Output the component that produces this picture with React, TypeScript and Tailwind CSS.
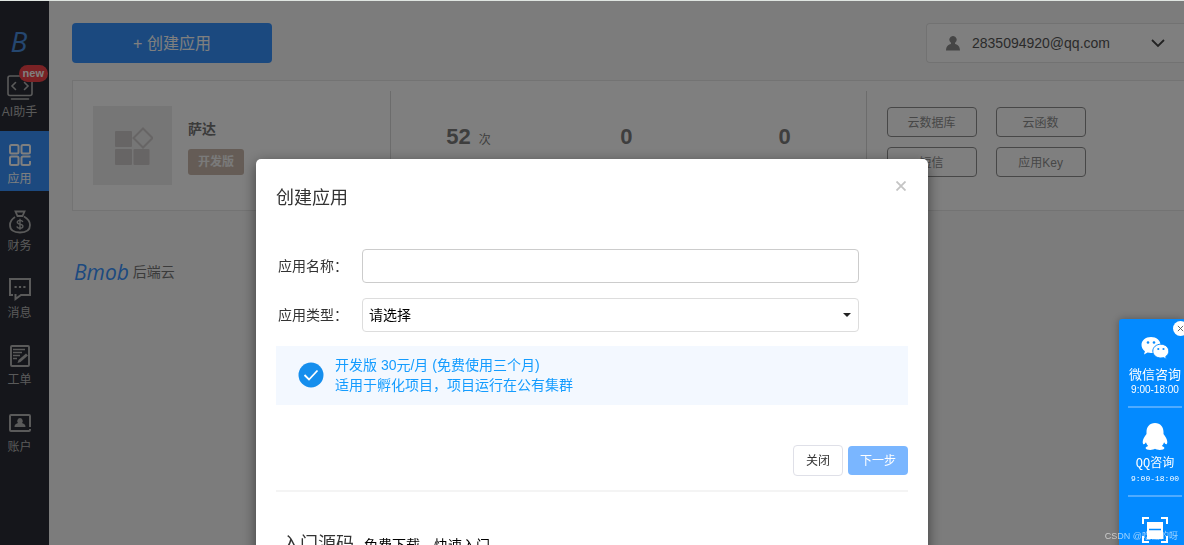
import type { ReactNode } from "react";

const FONT = "font-['Liberation_Sans','Noto_Sans_CJK_SC',sans-serif]";

function AiIcon() {
  return (
    <svg viewBox="0 0 26 26" className="h-[26px] w-[26px]" fill="none" stroke="currentColor" strokeWidth="1.6" strokeLinecap="round">
      <rect x="1" y="1" width="24" height="19.5" rx="2" />
      <path d="M8.5 7.5 5 11l3.500 3.500M17.500 7.500 21 11l-3.500 3.500M4.500 24h17" />
    </svg>
  );
}

function AppsIcon() {
  return (
    <svg viewBox="0 0 22 22" className="h-[22px] w-[22px]" fill="none" stroke="currentColor" strokeWidth="2">
      <rect x="1" y="1" width="8.500" height="8.500" rx="1.500" />
      <rect x="12.500" y="1" width="8.500" height="8.500" rx="1.500" />
      <rect x="1" y="12.500" width="8.500" height="8.500" rx="1.500" />
      <path d="M21.500 12.500H14a1.500 1.500 0 0 0-1.500 1.500v5.500A1.500 1.500 0 0 0 14 21h5.500a1.500 1.500 0 0 0 1.500-1.500V17" />
    </svg>
  );
}

function MoneyIcon() {
  return (
    <svg viewBox="0 0 24 24" className="h-6 w-6" fill="none" stroke="currentColor" strokeWidth="1.800">
      <path d="M7.500 1.500h9l-2 4.500h-5zM16 6.500c3.500 2 6 4.800 6 8.500 0 5-3.500 7.500-10 7.500S2 20 2 15c0-3.500 2-6 5-8" />
      <path d="M14.800 12c-.3-1-1.300-1.600-2.800-1.600s-2.700.7-2.700 1.900c0 2.700 5.600 1.300 5.600 4 0 1.200-1.200 1.900-2.900 1.900s-2.900-.7-3.100-1.900M12 8.800v11" strokeWidth="1.400" />
    </svg>
  );
}

function MessageIcon() {
  return (
    <svg viewBox="0 0 24 24" className="h-6 w-6" fill="none" stroke="currentColor" strokeWidth="2">
      <path d="M5 18H2V2h20v16H13l-5.500 4V17" />
      <path d="M6.500 10h2.200M10.900 10h2.200M15.300 10h2.200" />
    </svg>
  );
}

function OrderIcon() {
  return (
    <svg viewBox="0 0 24 24" className="h-6 w-6" fill="none" stroke="currentColor" strokeWidth="1.900">
      <rect x="3" y="2" width="18" height="20" rx="1" />
      <path d="M5 5.500h12M5 8.500h9M5 11.500h7M5 14.500h4" strokeWidth="1.600" />
      <path d="m9.500 19 1-3L18 9.500l2 2L12.500 18z" fill="currentColor" stroke="none" />
    </svg>
  );
}

function AccountIcon() {
  return (
    <svg viewBox="0 0 24 24" className="h-6 w-6" fill="none" stroke="currentColor" strokeWidth="2">
      <path d="M22 16V5a1 1 0 0 0-1-1H3a1 1 0 0 0-1 1v14a1 1 0 0 0 1 1h18a1 1 0 0 0 1-1v-1" />
      <path d="M12 7a3 3 0 0 1 2 5c2.500.8 3.500 1.800 3.500 4h-11c0-2.200 1-3.200 3.500-4a3 3 0 0 1 2-5z" fill="currentColor" stroke="none" />
    </svg>
  );
}

function PersonIcon() {
  return (
    <svg viewBox="0 0 14 15" className="h-[15px] w-[14px] text-[#8a8a8a]" fill="currentColor">
      <path d="M7 0a3.600 3.600 0 0 1 2.200 6.500L9 8c3 .7 4.800 2.200 5 6.500H0C.2 10.200 2 8.700 5 8l-.2-1.500A3.600 3.600 0 0 1 7 0z" />
    </svg>
  );
}

function WechatIcon() {
  return (
    <svg viewBox="0 0 28 24" className="h-6 w-7">
      <path d="M10 1C4.500 1 .5 4.500.5 9c0 2.500 1.300 4.700 3.400 6.200L3 18.500l3.600-1.900c1.100.3 2.200.5 3.400.5C15.500 17 19.500 13.500 19.500 9S15.500 1 10 1z" fill="#fff" />
      <circle cx="7" cy="6.500" r="1.300" fill="#0a8cff" />
      <circle cx="13" cy="6.500" r="1.300" fill="#0a8cff" />
      <path d="M19.800 8.200c-4.400 0-8 3-8 6.900s3.600 6.900 8 6.900c1 0 1.900-.1 2.700-.4l3 1.700-.8-2.700c1.900-1.300 3.100-3.200 3.100-5.500 0-3.900-3.600-6.900-8-6.900z" fill="#fff" stroke="#0a8cff" />
      <circle cx="17.300" cy="13" r="1.100" fill="#0a8cff" />
      <circle cx="22.500" cy="13" r="1.100" fill="#0a8cff" />
    </svg>
  );
}

function QqIcon() {
  return (
    <svg viewBox="0 0 26 27" className="h-[27px] w-[26px]" fill="#fff">
      <path d="M13 0c5.500 0 8.500 4 8.500 9v2c2 2.500 3.800 5.500 3.800 8 0 1.500-.5 2.300-1.100 2.300-.7 0-1.500-1-2.100-2-.4 1.500-1.200 2.800-2.200 3.800 1.500.5 2.500 1.200 2.500 2 0 1.200-2 1.900-4.700 1.900-2 0-3.700-.5-4.700-1.200C12 26.500 10.300 27 8.300 27c-2.700 0-4.700-.7-4.700-1.900 0-.8 1-1.500 2.500-2-1-1-1.800-2.300-2.200-3.800-.6 1-1.400 2-2.100 2C1.200 21.300.7 20.500.7 19c0-2.500 1.800-5.500 3.800-8V9C4.500 4 7.500 0 13 0z" />
    </svg>
  );
}

function ScanIcon() {
  return (
    <svg viewBox="0 0 26 26" className="h-[26px] w-[26px]" fill="none" stroke="#fff" strokeWidth="2">
      <path d="M1 7V1h6M19 1h6v6M1 19v6h6M19 25h6v-6" />
      <path d="M5 5h16v17H5z" fill="#fff" stroke="none" />
      <path d="M7 12.500h12" stroke="#038aff" strokeWidth="1.500" />
    </svg>
  );
}

function NavItem({ icon, label, active, badge }: { icon: ReactNode; label: string; active?: boolean; badge?: string }) {
  return (
    <a
      href="#"
      className={
        active
          ? "relative flex h-[60px] w-full flex-col items-center justify-end bg-[#3893ff] pr-[10px] text-white"
          : "relative flex h-[60px] w-full flex-col items-center justify-end pr-[10px] text-[#b4b4b4]"
      }
    >
      <span className="flex h-[26px] items-center">{icon}</span>
      <span className="mt-[2px] mb-[3px] text-xs leading-[18px] whitespace-nowrap">{label}</span>
      {badge && (
        <span className="absolute top-[1px] right-[1px] rounded-full bg-[#f5454a] px-1 text-[11px] leading-[17px] font-bold text-white">{badge}</span>
      )}
    </a>
  );
}

function Sidebar() {
  return (
    <nav className="flex w-[49px] shrink-0 flex-col bg-[#2a2d36]">
      <a href="#" className="flex h-16 items-end justify-center pr-[11px] pb-[7px] font-['Open_Sans'] text-[28px] leading-[32px] text-[#4b8fe0] italic">
        B
      </a>
      <div className="flex flex-col gap-[7px]">
        <NavItem icon={<AiIcon />} label="AI助手" badge="new" />
        <NavItem icon={<AppsIcon />} label="应用" active />
        <NavItem icon={<MoneyIcon />} label="财务" />
        <NavItem icon={<MessageIcon />} label="消息" />
        <NavItem icon={<OrderIcon />} label="工单" />
        <NavItem icon={<AccountIcon />} label="账户" />
      </div>
    </nav>
  );
}

function Stat({ value, unit }: { value: string; unit?: string }) {
  return (
    <div className="flex flex-1 items-baseline justify-center gap-2 pt-8 pr-1">
      <span className="text-[22px] leading-7 font-bold text-[#7d7d7d]">{value}</span>
      {unit && <span className="text-xs text-[#7d7d7d]">{unit}</span>}
    </div>
  );
}

function AppCard() {
  const actions = ["云数据库", "云函数", "短信", "应用Key"];
  return (
    <section className="grid grid-cols-[2fr_3fr_2fr] border-y border-l border-[#e6e6e6] bg-white py-[10px]">
      <div className="flex gap-4 px-5 py-[15px]">
        <div className="flex size-[79px] items-center justify-center bg-[#ededed]">
          <svg viewBox="0 0 40 40" className="size-10" fill="#cfcaca">
            <rect x="2" y="5" width="17" height="16" rx="1" />
            <rect x="2" y="23" width="17" height="16" rx="1" />
            <rect x="20.500" y="23" width="16" height="16" rx="1" />
            <path d="m30 2.500 9.500 9.500-9.500 9.500-9.500-9.500z" fill="none" stroke="#cfcaca" strokeWidth="2" />
          </svg>
        </div>
        <div className="flex flex-col items-start gap-[10px] pt-[13px]">
          <h2 className="text-sm leading-5 font-bold text-[#777]">萨达</h2>
          <span className="rounded-[3px] bg-[#cbb9ac] px-[10px] pt-px text-xs leading-[25px] font-bold text-[#f4f4f4]">开发版</span>
        </div>
      </div>
      <div className="flex border-x border-[#d8d8d8]">
        <Stat value="52" unit="次" />
        <Stat value="0" />
        <Stat value="0" />
      </div>
      <div className="px-5 py-4">
        <div className="grid w-max grid-cols-2 gap-x-[19px] gap-y-[10px]">
          {actions.map((label) => (
            <button key={label} type="button" className="h-[30px] w-[90px] rounded-[4px] border border-[#8f8f8f] pt-[2px] text-xs text-[#8f8f8f]">
              {label}
            </button>
          ))}
        </div>
      </div>
    </section>
  );
}

function CreateDialog() {
  return (
    <div className="fixed inset-0 overflow-hidden bg-black/50 px-4 pt-[159px]">
      <div
        role="dialog"
        aria-labelledby="create-title"
        className="mx-auto max-w-[672px] rounded-[5px] bg-white px-5 pb-10 text-[#333] shadow-[0_4px_14px_rgba(0,0,0,0.5)]"
      >
        <header className="flex items-start justify-between pt-[15px]">
          <h1 id="create-title" className="pt-[11px] text-lg leading-[26px] text-[#333]">
            创建应用
          </h1>
          <button type="button" aria-label="关闭窗口" className="flex h-6 w-[15px] items-center justify-center text-[#c4c4c4]">
            <svg viewBox="0 0 10 10" className="size-[10px]" stroke="currentColor" strokeWidth="1.800">
              <path d="m.5.5 9 9M9.500.5l-9 9" />
            </svg>
          </button>
        </header>
        <form className="pt-[38px] text-sm">
          <div className="grid grid-cols-[86px_1fr] gap-y-[14px] pr-[49px]">
            <label htmlFor="app-name" className="pl-[2px] leading-[35px]">
              应用名称：
            </label>
            <input id="app-name" type="text" className="h-[34px] w-full rounded-[4px] border border-[#ccc] px-2 outline-none" />
            <label htmlFor="app-type" className="pl-[2px] leading-[35px]">
              应用类型：
            </label>
            <div className="relative">
              <select id="app-type" className="h-[34px] w-full appearance-none rounded-[4px] border border-[#ddd] bg-white px-[6px] text-black outline-none">
                <option>请选择</option>
              </select>
              <svg viewBox="0 0 8 4" className="pointer-events-none absolute top-[15px] right-2 h-1 w-2" fill="#222">
                <path d="M0 0h8L4 4z" />
              </svg>
            </div>
          </div>
          <div className="mt-[13px] flex items-center gap-[11px] bg-[#f3f8ff] pt-[9px] pb-[10px] pl-[22px]">
            <svg viewBox="0 0 26 26" className="size-[26px]">
              <circle cx="13" cy="13" r="12.500" fill="#158eed" />
              <path d="m6.500 13 4.500 4.500 8.500-9" fill="none" stroke="#fff" strokeWidth="1.800" />
            </svg>
            <p className="leading-5 text-[#149cff]">
              开发版 30元/月 (免费使用三个月)
              <br />
              适用于孵化项目，项目运行在公有集群
            </p>
          </div>
          <div className="mt-10 flex items-center justify-end gap-[5px] border-b-2 border-[#f4f4f4] pb-[14px] text-xs">
            <button type="button" className="h-[31px] rounded-[4px] border border-[#dfe0e8] px-3 text-[#333]">
              关闭
            </button>
            <button type="button" className="h-[29px] rounded-[4px] bg-[#7ab6ff] px-3 text-white">
              下一步
            </button>
          </div>
        </form>
        <div className="flex items-baseline gap-[10px] pt-[38px] pl-[6px]">
          <h2 className="text-lg leading-7">入门源码</h2>
          <p className="text-sm text-black">免费下载，快速入门</p>
        </div>
      </div>
    </div>
  );
}

function ContactPanel() {
  return (
    <aside className="fixed top-[319px] right-0 flex w-[65px] flex-col items-center rounded-tl-[3px] bg-[#038aff] pt-[17px] pr-[2px] pb-10 pl-[9px] text-white shadow-[0_0_8px_rgba(0,0,0,0.3)]">
      <button type="button" aria-label="收起" className="absolute top-[2px] -right-1 flex size-[15px] items-center justify-center rounded-full bg-white text-[#555]">
        <svg viewBox="0 0 8 8" className="size-[7px]" stroke="currentColor">
          <path d="m1 1 6 6M7 1 1 7" />
        </svg>
      </button>
      <a href="#" className="flex w-full flex-col items-center border-b-2 border-[#4fabff] pb-[11px]">
        <WechatIcon />
        <span className="pt-[5px] text-[13px] leading-5 whitespace-nowrap">微信咨询</span>
        <span className="text-[10px] leading-[10px]">9:00-18:00</span>
      </a>
      <a href="#" className="flex w-full flex-col items-center border-b-2 border-[#4fabff] pt-[15px] pb-[11px]">
        <QqIcon />
        <span className="pt-1 font-['Liberation_Mono','Noto_Sans_CJK_SC',monospace] text-xs leading-5 whitespace-nowrap">QQ咨询</span>
        <span className="font-['Liberation_Mono',monospace] text-[8px] leading-[10px]">9:00-18:00</span>
      </a>
      <a href="#" aria-label="扫码" className="pt-5">
        <ScanIcon />
      </a>
    </aside>
  );
}

export default function App() {
  return (
    <div className={`min-h-screen bg-[#f8f8f8] ${FONT}`}>
      <div className="flex min-h-screen">
        <Sidebar />
        <main className="flex min-w-0 flex-1 flex-col pt-[23px] pl-[23px]">
          <div className="flex items-start justify-between pb-[17px]">
            <button type="button" className="h-10 w-[200px] rounded-[4px] bg-[#3693ff] pt-[2px] text-base text-white">
              + 创建应用
            </button>
            <button type="button" className="flex h-10 w-[258px] items-center rounded-l-[4px] border-y border-l border-[#e4e4e4] bg-white pr-[19px] pl-[19px] text-sm text-[#555]">
              <PersonIcon />
              <span className="flex-1 pl-3 text-left">2835094920@qq.com</span>
              <svg viewBox="0 0 14 9" className="h-[9px] w-[14px]" fill="none" stroke="#444" strokeWidth="1.800">
                <path d="m1 1 6 6 6-6" />
              </svg>
            </button>
          </div>
          <AppCard />
          <footer className="flex items-center gap-1 pt-[49px] pl-[2px]">
            <span className="font-['Open_Sans'] text-[21px] leading-6 font-medium text-[#3893ff] italic">Bmob</span>
            <span className="text-sm text-[#777]">后端云</span>
          </footer>
        </main>
      </div>
      <CreateDialog />
      <div className="fixed inset-x-0 top-0 h-px bg-[#dfe5e1]" />
      <ContactPanel />
      <p className="fixed right-[6px] bottom-[3px] text-[9px] leading-3 text-white/60">CSDN @吃糖的呀</p>
    </div>
  );
}
